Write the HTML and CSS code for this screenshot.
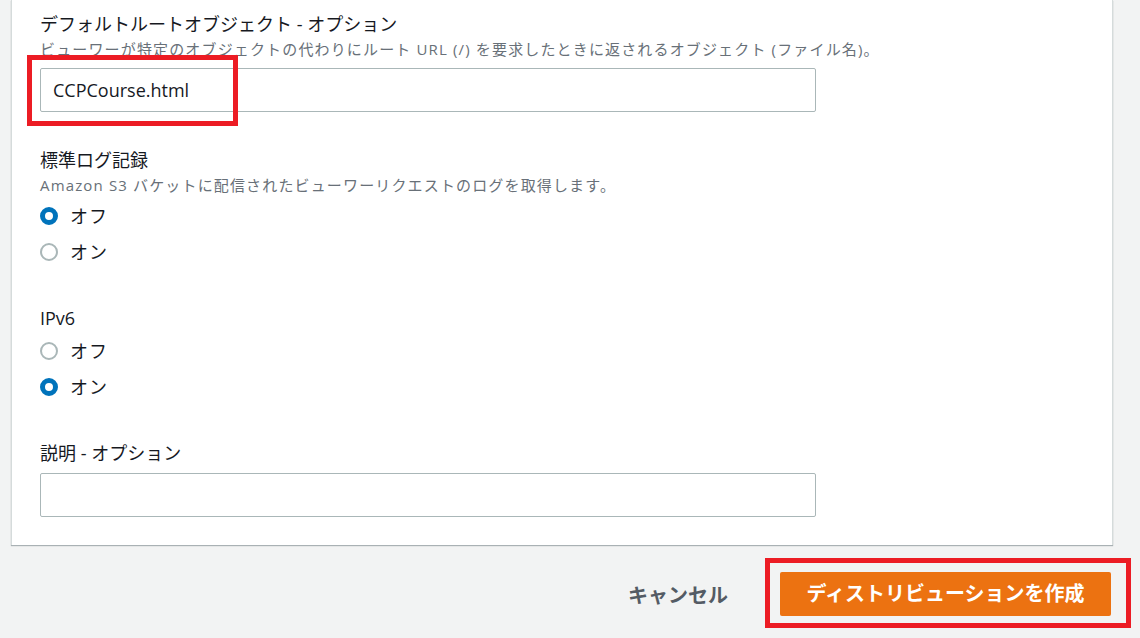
FILE: index.html
```html
<!DOCTYPE html>
<html lang="ja">
<head>
<meta charset="utf-8">
<link rel="stylesheet" href="styles.css">
</head>
<body>
<div class="page">
  <div class="card">
    <div class="field">
      <div class="label">デフォルトルートオブジェクト - オプション</div>
      <div class="desc">ビューワーが特定のオブジェクトの代わりにルート URL (/) を要求したときに返されるオブジェクト (ファイル名)。</div>
      <div class="control">
        <div class="input">CCPCourse.html</div>
        <div class="mark mark-input"></div>
      </div>
    </div>
    <div class="field">
      <div class="label">標準ログ記録</div>
      <div class="desc">Amazon S3 バケットに配信されたビューワーリクエストのログを取得します。</div>
      <div class="radios">
        <div class="radio"><span class="dot on"></span><span class="rtext">オフ</span></div>
        <div class="radio"><span class="dot"></span><span class="rtext">オン</span></div>
      </div>
    </div>
    <div class="field">
      <div class="label">IPv6</div>
      <div class="radios">
        <div class="radio"><span class="dot"></span><span class="rtext">オフ</span></div>
        <div class="radio"><span class="dot on"></span><span class="rtext">オン</span></div>
      </div>
    </div>
    <div class="field last">
      <div class="label">説明 - オプション</div>
      <div class="control tight">
        <div class="input"></div>
      </div>
    </div>
  </div>
  <div class="footer">
    <span class="cancel">キャンセル</span>
    <div class="btnwrap">
      <span class="primary">ディストリビューションを作成</span>
      <div class="mark mark-btn"></div>
    </div>
  </div>
</div>
</body>
</html>
```

FILE: styles.css
```css
* { box-sizing: border-box; }
html, body { margin: 0; padding: 0; }
body {
  background: #f2f3f3;
  font-family: "Open Sans", "Noto Sans CJK JP", sans-serif;
  color: #16191f;
  width: 1140px;
  height: 638px;
  overflow: hidden;
}
.page { padding-left: 11px; width: 1113px; }
.card {
  background: #fff;
  border-left: 1px solid #d5dbdb;
  border-right: 1px solid #d5dbdb;
  box-shadow: 0 1px 1px 0 rgba(0, 28, 36, 0.3);
  padding: 12px 28px 28px 28px;
}
.field { margin-bottom: 36px; }
.field.last { margin-bottom: 0; }
.label {
  font-size: 18px;
  line-height: 24px;
}
.desc {
  margin-top: 3px;
  font-size: 15px;
  line-height: 20px;
  color: #687078;
  letter-spacing: 1.15px;
}
.control { position: relative; margin-top: 9px; width: 776px; }
.control.tight { margin-top: 8px; }
.input {
  height: 44px;
  border: 1px solid #aab7b8;
  border-radius: 2px;
  padding: 0 12px;
  font-size: 18px;
  line-height: 42px;
}
.mark {
  position: absolute;
  border: 5px solid #ec1c24;
}
.mark-input { left: -13px; top: -13px; width: 211px; height: 71px; }
.radios { margin-top: 3px; }
.radio {
  display: flex;
  align-items: center;
  height: 36px;
}
.dot {
  width: 18px;
  height: 18px;
  border-radius: 50%;
  border: 2px solid #aab7b8;
  margin-right: 12px;
  flex: none;
}
.dot.on { border: 5px solid #0073bb; background: #fff; }
.rtext { font-size: 18px; line-height: 24px; letter-spacing: 1px; }
.footer {
  display: flex;
  justify-content: flex-end;
  align-items: center;
  padding-top: 27px;
  padding-right: 2px;
}
.cancel {
  font-size: 20px;
  font-weight: bold;
  color: #545b64;
  margin-right: 52px;
}
.btnwrap { position: relative; }
.primary {
  display: block;
  width: 331px;
  height: 44px;
  background: #ec7211;
  border-radius: 2px;
  color: #fff;
  font-size: 20px;
  font-weight: bold;
  line-height: 44px;
  text-align: center;
}
.mark-btn { left: -15px; top: -14px; width: 366px; height: 70px; }
```
